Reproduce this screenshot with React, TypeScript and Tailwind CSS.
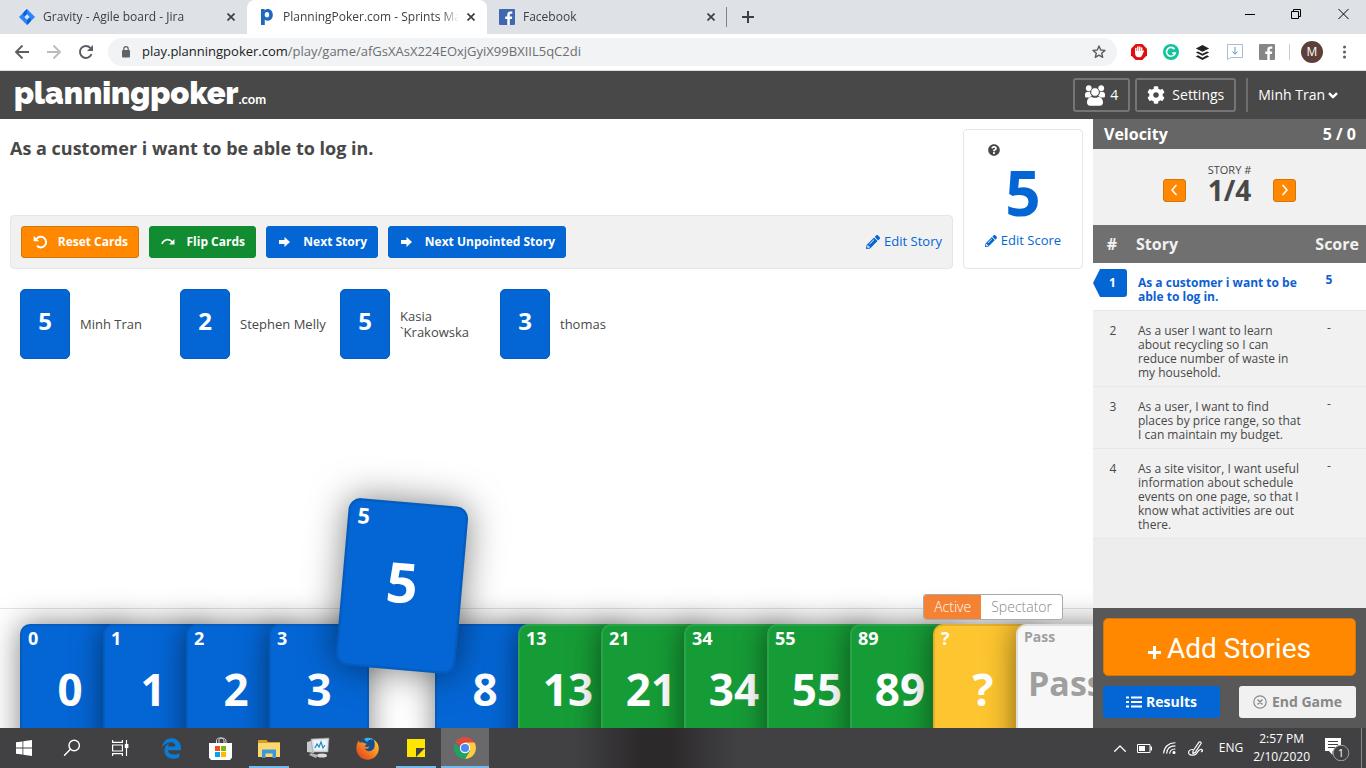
import React, { useState } from "react";
import { FaPencilAlt, FaCog, FaQuestionCircle } from "react-icons/fa";
import { FaEdgeLegacy } from "react-icons/fa6";
import { SiBuffer } from "react-icons/si";

const stroke = { fill: "none", stroke: "currentColor", strokeLinecap: "round", strokeLinejoin: "round" } as const;

function CloseMark() {
  return (
    <svg width="8" height="8" viewBox="0 0 8 8" fill="none" stroke="#3c4043" strokeWidth="1.7">
      <path d="M0.5 0.5l7 7M7.5 0.5l-7 7" />
    </svg>
  );
}

function JiraIcon() {
  return (
    <svg width="16" height="16" viewBox="0 0 16 16" className="shrink-0">
      <path d="M8 0l8 8-8 8-8-8z" fill="#2684ff" />
      <path d="M8 0L5.4 2.6a3.7 3.7 0 0 0 0 5.2L8 5.3z" fill="#0c5fdc" />
      <path d="M8 16l2.6-2.6a3.7 3.7 0 0 0 0-5.2L8 10.7z" fill="#0c5fdc" />
      <path d="M8 5.3L10.7 8 8 10.7 5.3 8z" fill="#dfe3e8" />
    </svg>
  );
}

function PokerIcon() {
  return (
    <svg width="16" height="18" viewBox="-1 0 16 18" className="shrink-0">
      <path
        fillRule="evenodd"
        d="M1 1h3.6v1.4C5.400 1.400 6.400 .9 7.800.9c3 0 5 2.400 5 5.900s-2 5.900-5 5.900c-1.300 0-2.300-.4-3-1.200V17H1zM7 4C5.600 4 4.700 5.100 4.700 6.800S5.600 9.600 7 9.600s2.200-1.100 2.200-2.800S8.300 4 7 4z"
        fill="#1c69bd"
      />
    </svg>
  );
}

function FacebookTile({ color, size }: { color: string; size: number }) {
  return (
    <svg width={size} height={size} viewBox="0 0 16 16" className="shrink-0">
      <rect width="16" height="16" rx="1" fill={color} />
      <path d="M10.800 16V9.900h2.100l.3-2.400h-2.400V6c0-.7.2-1.200 1.200-1.200h1.300V2.600c-.2 0-1-.1-1.900-.1-1.900 0-3.100 1.100-3.100 3.200v1.800H6.200v2.400h2.100V16z" fill="#fff" />
    </svg>
  );
}

function Tab({ icon, title, active }: { icon: React.ReactNode; title: string; active?: boolean }) {
  return (
    <div className={"flex h-full w-60 items-center gap-2 px-3 " + (active ? "rounded-t-lg bg-white" : "")}>
      {icon}
      <a href="#tab" className="min-w-0 flex-1 overflow-hidden text-xs whitespace-nowrap text-[#3c4043] [mask-image:linear-gradient(to_right,#000_90%,transparent)]">
        {title}
      </a>
      <button aria-label={"Close " + title}>
        <CloseMark />
      </button>
    </div>
  );
}

function TabStrip() {
  return (
    <div className="flex h-[34px] bg-[#dee1e6]">
      <div className="flex w-[247px] justify-end">
        <Tab icon={<JiraIcon />} title="Gravity - Agile board - Jira" />
      </div>
      <Tab icon={<PokerIcon />} title="PlanningPoker.com - Sprints Made Simple" active />
      <div className="flex items-center">
        <Tab icon={<FacebookTile color="#4267b2" size={16} />} title="Facebook" />
        <span className="-ml-px h-5 w-px bg-[#808387]" />
      </div>
      <button aria-label="New tab" className="ml-[14px] text-[#3c4043]">
        <svg width="14" height="14" viewBox="0 0 14 14" {...stroke} strokeWidth="2" strokeLinecap="butt">
          <path d="M7 1v12M1 7h12" />
        </svg>
      </button>
      <div className="ml-auto flex items-start gap-9 pt-2 pr-[17px] text-black">
        <button aria-label="Minimize">
          <svg width="10" height="12" viewBox="0 0 10 12" stroke="currentColor"><path d="M0 6.500h10" /></svg>
        </button>
        <button aria-label="Restore">
          <svg width="11" height="12" viewBox="0 0 11 12" fill="none" stroke="currentColor"><path d="M.5 3.500h7v7h-7zM2.500 3.500v-2h7v7h-2" /></svg>
        </button>
        <button aria-label="Close window">
          <svg width="11" height="12" viewBox="0 0 11 12" stroke="currentColor"><path d="M.5 1l10 10M10.500 1l-10 10" /></svg>
        </button>
      </div>
    </div>
  );
}

function AddressBar() {
  return (
    <div className="flex h-[37px] items-center border-b border-[#dcdcdc] bg-white pr-5 pl-[14px] text-[#5a5d61]">
      <div className="flex items-center gap-4">
        <button aria-label="Back">
          <svg width="16" height="16" viewBox="0 0 16 16" {...stroke} strokeWidth="1.8" strokeLinecap="butt" strokeLinejoin="miter"><path d="M15 8H2M8.500 1.500L2 8l6.500 6.500" /></svg>
        </button>
        <button aria-label="Forward" className="text-[#b9bbbe]">
          <svg width="16" height="16" viewBox="0 0 16 16" {...stroke} strokeWidth="1.8" strokeLinecap="butt" strokeLinejoin="miter"><path d="M1 8h13M7.500 1.500L14 8l-6.500 6.500" /></svg>
        </button>
        <button aria-label="Reload">
          <svg width="16" height="16" viewBox="0 0 16 16" {...stroke} strokeWidth="1.900" strokeLinecap="butt"><path d="M13.500 10.200A6 6 0 1 1 12.300 3.800L13.500 5" /><path d="M15 1v6H9z" fill="currentColor" stroke="none" /></svg>
        </button>
      </div>
      <div className="mr-[14px] ml-[14px] flex h-7 flex-1 items-center rounded-full bg-[#f1f3f4] pr-[11px] pl-[14px]">
        <svg width="8" height="12" viewBox="0 0 8 12" className="shrink-0"><rect y="4" width="8" height="7.500" rx="1" fill="#5f6368" /><path d="M1.800 5V2.900a2.200 2.200 0 0 1 4.400 0V5" fill="none" stroke="#5f6368" strokeWidth="1.200" /></svg>
        <a href="#page" className="ml-3 min-w-0 flex-1 text-[13px] text-[#6b6e73]">
          <span className="text-[#202124]">play.planningpoker.com</span>/play/game/afGsXAsX224EOxjGyiX99BXIIL5qC2di
        </a>
        <svg width="14" height="14" viewBox="0 0 14 14" {...stroke} strokeWidth="1.400"><path d="M7 1l1.700 4 4.300.4-3.300 2.800 1 4.200L7 10.200l-3.700 2.200 1-4.200L1 5.400 5.300 5z" /></svg>
      </div>
      <div className="flex items-center">
        <svg width="16" height="16" viewBox="0 0 16 16"><path d="M4.700 0h6.600L16 4.700v6.600L11.300 16H4.700L0 11.300V4.700z" fill="#e40d0d" /><path d="M4.800 8.500V4.500M6.800 8V2.900M8.800 8V2.900M10.700 8.500V4" stroke="#fff" strokeWidth="1.500" strokeLinecap="round" /><path d="M4.100 7h7.400l1-.8c.6.200.6.700.3 1.200l-1.800 4c-.6 1.300-1.400 1.900-3 1.900-2.700 0-3.900-1.400-3.900-4z" fill="#fff" /></svg>
        <svg width="16" height="16" viewBox="0 0 16 16" className="ml-4"><circle cx="8" cy="8" r="8" fill="#15c39a" /><path d="M11.500 5.200A4.400 4.400 0 1 0 12.200 9H9.200M12.200 9l-1 2.300" fill="none" stroke="#fff" strokeWidth="1.600" /></svg>
        <SiBuffer size={15} className="ml-4 text-[#222]" />
        <svg width="16" height="16" viewBox="0 0 16 16" className="ml-[17px]" fill="none" stroke="#a9bcd3"><path d="M.5 .5h15v13H4L.5 15.500z" /><path d="M8 3v7M5.500 7.500L8 10.200l2.500-2.700" stroke="#6f93bf" /></svg>
        <span className="ml-4"><FacebookTile color="#868686" size={16} /></span>
        <span className="ml-[14px] h-4 w-px bg-[#c8cacd]" />
        <button className="ml-[11px] size-[22px] rounded-full bg-[#5d4037] text-xs text-white">M</button>
        <button aria-label="Menu" className="ml-5"><svg width="3" height="14" viewBox="0 0 3 14" fill="#5a5d61"><circle cx="1.500" cy="2" r="1.500" /><circle cx="1.500" cy="7" r="1.500" /><circle cx="1.500" cy="12" r="1.500" /></svg></button>
      </div>
    </div>
  );
}

function PeopleIcon() {
  return (
    <svg width="20" height="21" viewBox="0 0 20 21" fill="#fff">
      <circle cx="3.800" cy="3.200" r="2.900" />
      <circle cx="16.200" cy="3.200" r="2.900" />
      <path d="M0 9.500C0 7.600 1.300 6.800 3 6.800h2c.3 1.800.9 3.300 2 4.300-1 .3-1.700.6-2.300 1.400H1.500C.6 12.500 0 12 0 11zM20 9.500c0-1.900-1.300-2.700-3-2.700h-2c-.3 1.800-.9 3.300-2 4.300 1 .3 1.700.6 2.300 1.400h3.200c.9 0 1.500-.5 1.500-1.500z" />
      <circle cx="10" cy="7" r="4.300" stroke="#484848" strokeWidth=".8" />
      <path d="M2 17.500c0-3.500 2-5.600 5-5.600.9.600 1.900.9 3 .9s2.100-.3 3-.9c3 0 5 2.100 5 5.600 0 2-1.200 3.200-3 3.200H5c-1.800 0-3-1.200-3-3.200z" />
    </svg>
  );
}

function AppHeader() {
  return (
    <header className="flex h-12 items-center bg-[#484848] pr-7 pl-[14px] text-sm text-white">
      <a href="#home" className="flex items-baseline pb-1">
        <span className="font-['Raleway','Lato',sans-serif] text-[31px] leading-8 font-black">planningpoker</span>
        <span className="font-['Lato',sans-serif] text-[13px] font-bold">.com</span>
      </a>
      <button className="ml-auto flex h-[34px] items-center gap-[5px] rounded-[3px] border-2 border-[#757575] px-[10px]">
        <PeopleIcon />4
      </button>
      <button className="ml-[5px] flex h-[34px] items-center gap-[7px] rounded-[3px] border-2 border-[#757575] px-[10px]">
        <FaCog size={18} />
        Settings
      </button>
      <span className="mx-[10px] h-[34px] w-[2px] bg-[#6e6e6e]" />
      <button className="flex items-center gap-[3px]">
        Minh Tran
        <svg width="10" height="7" viewBox="0 0 10 7" {...stroke} strokeWidth="2.400" strokeLinecap="butt"><path d="M1 1.200l4 4 4-4" /></svg>
      </button>
    </header>
  );
}

const resetIcon = (
  <svg width="15" height="14" viewBox="0 0 15 14" fill="none" stroke="#fff" strokeWidth="2"><path d="M3.500 4A5.300 5.300 0 1 1 4 10.800" /><path d="M.6 .8v5.400h5.400z" fill="#fff" stroke="none" /></svg>
);
const flipIcon = (
  <svg width="14" height="8" viewBox="0 0 14 8" fill="none" stroke="#fff" strokeWidth="1.600"><path d="M.8 5.800C3 1.200 8 .2 11.500 4" /><path d="M13.500 .9V6.400H8z" fill="#fff" stroke="none" /></svg>
);
const nextIcon = (
  <svg width="11" height="10" viewBox="0 0 11 10" fill="#fff"><path d="M0 3h5.500V0L11 5l-5.500 5V7H0z" /></svg>
);

function ActionButton({ icon, label, tone }: { icon: React.ReactNode; label: string; tone: string }) {
  return (
    <button className={"flex h-8 items-center justify-between rounded-[3px] border pr-[10px] text-xs font-bold text-white " + tone}>
      {icon}
      {label}
    </button>
  );
}

const players = [
  { score: "5", name: "Minh Tran" },
  { score: "2", name: "Stephen Melly" },
  { score: "5", name: "Kasia `Krakowska" },
  { score: "3", name: "thomas" },
];

const blue = "bg-[#0466d5] border-[#055cbf] text-white";
const green = "bg-[#169c36] border-[#2ba34a] text-white";
const deck = [
  { value: "0", tone: blue },
  { value: "1", tone: blue },
  { value: "2", tone: blue },
  { value: "3", tone: blue },
  { value: "5", tone: blue },
  { value: "8", tone: blue },
  { value: "13", tone: green },
  { value: "21", tone: green },
  { value: "34", tone: green },
  { value: "55", tone: green },
  { value: "89", tone: green },
  { value: "?", tone: "bg-[#fdc52f] border-[#e2af2c] text-white" },
  { value: "Pass", tone: "bg-[#f7f7f7] border-[#dedede] text-[#9f9f9f]" },
];

function Deck() {
  const [picked, setPicked] = useState("5");
  return (
    <div className="flex h-[104px] pl-5">
      {deck.map((card) => {
        const up = card.value === picked;
        const pass = card.value === "Pass";
        return (
          <button
            key={card.value}
            onClick={() => setPicked(card.value)}
            className={
              "-mr-[17px] flex h-[140px] w-[100px] shrink-0 flex-col rounded-[10px] border-2 px-[6px] text-left font-bold shadow-[0_0_30px_rgba(0,0,0,0.5)] " +
              card.tone +
              (up ? " z-10 -translate-y-[108px] scale-120 rotate-5" : "")
            }
          >
            <span className={pass ? "pt-[3px] text-sm leading-4" : "pt-[2px] text-lg leading-5"}>{card.value}</span>
            <span className={pass ? "pt-4 pl-1 text-[34px] leading-[44px]" : up ? "pt-5 text-center text-[46px] leading-[44px]" : "pt-[19px] text-center text-[44px] leading-[44px]"}>
              {card.value}
            </span>
          </button>
        );
      })}
    </div>
  );
}

function Board() {
  return (
    <main className="relative flex min-w-0 flex-1 flex-col overflow-hidden bg-white">
      <div className="flex gap-[10px] p-[10px]">
        <div className="flex min-w-0 flex-1 flex-col justify-between">
          <h1 className="pt-[6px] text-lg leading-[26px] font-bold text-[#484848]">As a customer i want to be able to log in.</h1>
          <div className="flex h-[54px] items-center gap-[10px] rounded-[4px] border border-[#e6e6e6] bg-[#f1f1f1] px-[10px]">
            <ActionButton icon={resetIcon} label="Reset Cards" tone="w-[118px] pl-[11px] bg-[#ff8800] border-[#d27607]" />
            <ActionButton icon={flipIcon} label="Flip Cards" tone="w-[107px] pl-[11px] bg-[#128c30] border-[#0f8c2f]" />
            <ActionButton icon={nextIcon} label="Next Story" tone="w-[112px] pl-3 bg-[#0466d5] border-[#0466d5]" />
            <ActionButton icon={nextIcon} label="Next Unpointed Story" tone="w-[178px] pl-3 bg-[#0466d5] border-[#0466d5]" />
            <a href="#edit-story" className="ml-auto flex items-center gap-1 text-[13px] text-[#0466d5]">
              <FaPencilAlt size={14} />
              Edit Story
            </a>
          </div>
        </div>
        <section className="flex h-[140px] w-[120px] flex-col items-center rounded-[4px] border border-[#e6e6e6]">
          <FaQuestionCircle size={12} className="mt-[14px] mr-[58px] shrink-0 text-[#484848]" />
          <strong className="mt-1 text-[62px] leading-[64px] text-[#0466d5]">5</strong>
          <a href="#edit-score" className="mt-[7px] flex items-center gap-1 text-[13px] text-[#0466d5]">
            <FaPencilAlt size={12} />
            Edit Score
          </a>
        </section>
      </div>
      <ul className="flex flex-wrap px-5 pt-[10px]">
        {players.map((p) => (
          <li key={p.name} className="flex w-40 items-center gap-[10px]">
            <span className="flex h-[70px] w-[50px] shrink-0 items-center justify-center rounded-[5px] border border-[#055cbf] bg-[#0466d5] pb-[6px] text-2xl font-bold text-white">{p.score}</span>
            <span className="w-[90px] text-[13px] leading-4 text-[#484848]">{p.name}</span>
          </li>
        ))}
      </ul>
      <div className="relative mt-auto border-t border-[#dfe3ea] pt-[15px]">
        <Deck />
        <div className="absolute -top-[15px] right-[30px] flex h-[26px] overflow-hidden rounded-[3px] border border-[#aaa] bg-white text-sm font-light">
          <button className="bg-[#f58233] px-[10px] text-white">Active</button>
          <button className="px-[10px] text-[#888]">Spectator</button>
        </div>
      </div>
    </main>
  );
}

const stories = [
  { n: 1, text: "As a customer i want to be able to log in.", score: "5" },
  { n: 2, text: "As a user I want to learn about recycling so I can reduce number of waste in my household.", score: "-" },
  { n: 3, text: "As a user, I want to find places by price range, so that I can maintain my budget.", score: "-" },
  { n: 4, text: "As a site visitor, I want useful information about schedule events on one page, so that I know what activities are out there.", score: "-" },
];

function StepButton({ label, d }: { label: string; d: string }) {
  return (
    <button aria-label={label} className="flex size-[23px] items-center justify-center rounded-[3px] border border-[#d27607] bg-[#ff8800] text-white">
      <svg width="8" height="12" viewBox="0 0 8 12" {...stroke} strokeWidth="1.700"><path d={d} /></svg>
    </button>
  );
}

function Sidebar() {
  return (
    <aside className="flex w-[273px] shrink-0 flex-col bg-[#ededed] text-[#484848]">
      <div className="flex h-[30px] items-center justify-between bg-[#666] pr-[10px] pl-[11px] font-bold text-white">
        <span>Velocity</span>
        <span>5 / 0</span>
      </div>
      <div className="flex h-[76px] items-center justify-center gap-[22px] bg-[#f1f1f1] pb-[6px]">
        <div className="pt-3"><StepButton label="Previous story" d="M6 1.500L2 6l4 4.500" /></div>
        <div className="text-center">
          <div className="text-[11px] leading-3">STORY #</div>
          <div className="text-[28px] leading-7 font-bold">1/4</div>
        </div>
        <div className="pt-3"><StepButton label="Next story" d="M2 1.500L6 6l-4 4.500" /></div>
      </div>
      <table className="w-full table-fixed border-collapse text-xs leading-[14px]">
        <thead>
          <tr className="h-[38px] bg-[#707070] text-base text-[#f1f1f1]">
            <th className="w-[38px] text-center">#</th>
            <th className="pl-[5px] text-left">Story</th>
            <th className="w-[62px] pr-[7px] text-right">Score</th>
          </tr>
        </thead>
        <tbody>
          {stories.map((s) => {
            const on = s.n === 1;
            return (
              <tr key={s.n} className={on ? "bg-white align-top font-bold text-[#0d5fd3]" : "bg-[#f1f1f1] align-top"}>
                <td className={on ? "border-b border-[#e8e8e8] pt-[6px] text-center" : "border-b border-[#e8e8e8] pt-[13px] pl-[2px] text-center"}>
                  {on ? (
                    <span className="block h-7 w-[34px] rounded-r-[3px] bg-[#0466d5] pl-[5px] leading-7 text-white [clip-path:polygon(0_50%,7px_0,100%_0,100%_100%,7px_100%)]">1</span>
                  ) : (
                    s.n
                  )}
                </td>
                <td className="border-b border-[#e8e8e8] pt-[13px] pr-0 pb-[6px] pl-[7px]">{s.text}</td>
                <td className="border-b border-[#e8e8e8] pt-[10px] pr-3 text-center">{s.score}</td>
              </tr>
            );
          })}
        </tbody>
      </table>
      <div className="mt-auto flex flex-col gap-[10px] bg-[#585858] p-[10px]">
        <button className="flex h-[58px] items-center justify-center gap-[6px] rounded-[5px] border border-[#d27607] bg-[#ff8800] pt-[3px] font-['Roboto',sans-serif] text-[28px] text-white">
          <svg width="13" height="13" viewBox="0 0 13 13" className="mt-2" stroke="#fff" strokeWidth="3"><path d="M6.500 0v13M0 6.500h13" /></svg>
          Add Stories
        </button>
        <div className="flex justify-between text-sm font-bold">
          <button className="flex h-8 w-[117px] items-center justify-center gap-1 rounded-[3px] bg-[#0466d5] text-white">
            <svg width="16" height="12" viewBox="0 0 16 12" stroke="#fff" strokeWidth="2.200"><path d="M0 1.500h3M5 1.500h11M0 6h3M5 6h11M0 10.500h3M5 10.500h11" /></svg>
            Results
          </button>
          <button className="flex h-8 w-[117px] items-center justify-center gap-[5px] rounded-[3px] bg-[#f1f1f1] text-[#888]">
            <svg width="14" height="14" viewBox="0 0 14 14" {...stroke} strokeWidth="1.200"><circle cx="7" cy="7" r="6.200" /><path d="M5 5l4 4M9 5L5 9" strokeWidth="1.500" /></svg>
            End Game
          </button>
        </div>
      </div>
    </aside>
  );
}

function TaskButton({ label, children, state }: { label: string; children: React.ReactNode; state?: "open" | "active" }) {
  return (
    <button
      aria-label={label}
      className={
        state === "active"
          ? "flex h-full w-12 items-center justify-center border-y-2 border-t-transparent border-b-[#76b9ed] bg-[#69696c]"
          : state === "open"
            ? "mx-1 flex h-full w-10 items-center justify-center border-y-2 border-t-transparent border-b-[#76b9ed]"
            : "flex h-full w-12 items-center justify-center"
      }
    >
      {children}
    </button>
  );
}

function Taskbar() {
  return (
    <footer className="flex h-10 items-center bg-[#414144] bg-[linear-gradient(to_right,transparent_42%,#2c292a_47%,#2c292a_49%,transparent_54%)] text-xs text-white">
      <div className="flex h-full">
        <TaskButton label="Start">
          <svg width="16" height="16" viewBox="0 0 16 16" fill="#fff"><path d="M0 2.300l6.500-.9v6.200H0zM7.300 1.300L16 0v7.600H7.300zM0 8.400h6.500v6.200L0 13.700zM7.300 8.400H16V16l-8.700-1.200z" /></svg>
        </TaskButton>
        <TaskButton label="Search">
          <svg width="18" height="18" viewBox="0 0 18 18" {...stroke} strokeWidth="1.400"><circle cx="11.200" cy="6.500" r="5.200" /><path d="M7.400 10.300L1.500 16.200" /></svg>
        </TaskButton>
        <TaskButton label="Task view">
          <svg width="17" height="16" viewBox="0 0 17 16" fill="none" stroke="#fff" strokeWidth="1.200"><path d="M.6 5h9.800v6H.6zM.6 0v2.400h9.800V0M.6 16v-2.400h9.800V16M14.500 0v16" /><path d="M13.400 4.500h2.400v3h-2.400z" fill="#fff" /></svg>
        </TaskButton>
      </div>
      <div className="ml-[3px] flex h-full gap-px">
        <TaskButton label="Edge"><FaEdgeLegacy size={21} className="text-[#0a7bd7]" /></TaskButton>
        <TaskButton label="Store">
          <svg width="23" height="23" viewBox="0 0 23 23"><path d="M7.500 7V3.800C7.500 1.800 9 1 11 1s4 .8 4 2.800V7M10 6V3c0-1 1-2 3-2s4 1 4 3v2" fill="none" stroke="#ddd" /><path d="M0 6h23v14.500L21 23H2l-2-2.500z" fill="#fff" /><path d="M6 9h5v5H6z" fill="#f25022" /><path d="M12 9h5v5h-5z" fill="#7fba00" /><path d="M6 15h5v5H6z" fill="#00a4ef" /><path d="M12 15h5v5h-5z" fill="#ffb900" /></svg>
        </TaskButton>
        <TaskButton label="File Explorer" state="open">
          <svg width="22" height="19" viewBox="0 0 22 19"><path d="M0 1h8.500L10 3h12v15H0z" fill="#d9a01c" /><path d="M0 4h22v14H0z" fill="#fcd872" /><path d="M4 10.500h14V19h-3.500v-4.500h-7V19H4z" fill="#3e98d8" /></svg>
        </TaskButton>
        <TaskButton label="Performance monitor">
          <svg width="24" height="22" viewBox="0 0 24 22"><path d="M1 5l7-2v13l-7-1z" fill="#c8cccf" /><path d="M5 2l18-1-1 14H7z" fill="#dfe3e6" stroke="#999" strokeWidth=".6" /><path d="M7.500 3.500L21 3l-.8 9.500-11.200.500z" fill="#eaf7fd" /><path d="M9 11l2-4 2 3 2-5 2 6 2-3" fill="none" stroke="#2788b8" strokeWidth="1.200" /><ellipse cx="16" cy="18.500" rx="5" ry="2" fill="#d8dadc" /><path d="M5 16l7 2-2 3-7-3z" fill="#b2b6b9" /></svg>
        </TaskButton>
        <TaskButton label="Firefox">
          <svg width="23" height="23" viewBox="0 0 23 23"><defs><linearGradient id="ff" x1="1" y1="0" x2="0" y2="1"><stop offset="0" stopColor="#ffd43b" /><stop offset=".5" stopColor="#f58220" /><stop offset="1" stopColor="#d8341f" /></linearGradient></defs><circle cx="12" cy="10" r="9.500" fill="#17508f" /><path d="M8 2c3-2 8-1.500 10 1-3-1-6 0-7 2z" fill="#43b1dc" /><path d="M3 3.500c0 1.100.3 1.700.8 2.200C5 5 6.500 5 8 6l2.500.7c-.2 1.400-1.500 1.500-2 2.600 1.600 1 3.200.7 4.800.3-.7 2-2.300 2.600-4.600 2.100 1.800 3.100 6.200 3.200 8.600.5C19.500 9.500 19 5 17.500 2.500c4 2.500 6 6.500 5.100 11C21.500 19 17 22.700 11.500 22.700 5.500 22.700.5 18 .4 12 .3 8.600 1 5.500 3 3.500z" fill="url(#ff)" /></svg>
        </TaskButton>
        <TaskButton label="Sticky Notes" state="open">
          <svg width="18" height="18" viewBox="0 0 18 18"><path d="M0 0h18v18H0z" fill="#ffe500" /><path d="M9 9h9l-9 9z" fill="#3f3f46" /></svg>
        </TaskButton>
        <TaskButton label="Chrome" state="active">
          <svg width="22" height="22" viewBox="0 0 22 22"><path d="M11 11L1.500 5.500A11 11 0 0 1 20.500 5.500z" fill="#e04a3c" /><path d="M11 11V5.500h9.500A11 11 0 0 1 11 22l4.800-8.200z" fill="#ffcd40" /><path d="M1.500 5.500A11 11 0 0 0 11 22l4.800-8.200L11 11 6.200 13.700z" fill="#1da462" /><circle cx="11" cy="11" r="5.200" fill="#fff" /><circle cx="11" cy="11" r="4.100" fill="#4a8af4" /></svg>
        </TaskButton>
      </div>
      <div className="ml-auto flex items-center">
        <svg width="12" height="7" viewBox="0 0 12 7" {...stroke} strokeWidth="1.300"><path d="M.7 6.300L6 1l5.300 5.300" /></svg>
        <svg width="15" height="9" viewBox="0 0 15 9" className="ml-[11px]"><path d="M.5 .5h12.500v8H.5z" fill="none" stroke="#fff" /><path d="M2 2h6v5H2zM13.500 2.500H15v4h-1.500z" fill="#fff" /></svg>
        <svg width="13" height="12" viewBox="0 0 13 12" className="ml-[11px]" {...stroke} strokeWidth="1.100"><path d="M.7 11C1 5 5.500 1 12 .8M3.700 11.200C4 7 7 4 12 3.900M6.700 11.300C7 9 8.800 7.200 12 7" /><circle cx="11" cy="10.500" r="1" fill="#fff" /></svg>
        <svg width="17" height="15" viewBox="0 0 17 15" className="ml-3" {...stroke} strokeWidth="1.200"><path d="M5 10L11 1.200c.9-1 2.600.1 2 1.300L7.300 11.400 4.800 12.500zM4.500 8.500C1 8.500 0 11 1 12.800c1.500 2.200 5.500 1.500 7 .2 2-1.800 2-4 4.500-4.500 2-.4 2.500 1.500 1 2.300" /></svg>
        <span className="ml-[14px]">ENG</span>
        <div className="ml-[10px] text-center leading-[18px]">
          2:57 PM
          <br />
          2/10/2020
        </div>
        <svg width="25" height="25" viewBox="0 0 25 25" className="ml-[15px]"><path d="M0 2h16v13H7.500v4L4 15H0z" fill="#fff" /><path d="M3 5.500h10M3 8.500h10M3 11.500h7" stroke="#414144" /><circle cx="16" cy="17" r="7.800" fill="#414144" stroke="#a0a0a0" /><text x="16" y="21" textAnchor="middle" fontSize="11" fill="#fff">1</text></svg>
        <span className="ml-[11px] h-10 w-px bg-[#85858a]" />
        <span className="w-1" />
      </div>
    </footer>
  );
}

export default function App() {
  return (
    <div className="flex min-h-screen flex-col bg-white font-['Open_Sans',sans-serif]">
      <TabStrip />
      <AddressBar />
      <AppHeader />
      <div className="flex flex-1">
        <Board />
        <Sidebar />
      </div>
      <Taskbar />
    </div>
  );
}
